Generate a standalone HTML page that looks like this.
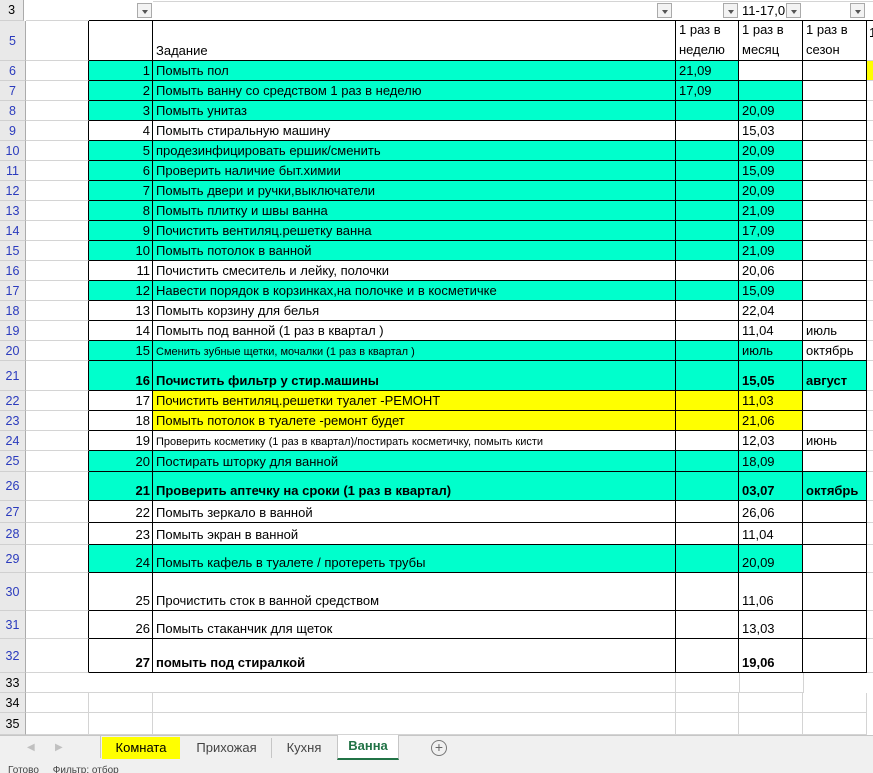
<!DOCTYPE html>
<html><head><meta charset="utf-8"><style>
*{margin:0;padding:0;box-sizing:border-box}
body{width:873px;height:773px;overflow:hidden;background:#fff;font-family:"Liberation Sans",sans-serif;font-size:13px;color:#000;position:relative}
.r{position:absolute;left:0;width:873px;display:flex}
.c{height:100%;display:flex;align-items:flex-end;padding:0 2px 2px 3px;white-space:nowrap;overflow:hidden;border-right:1px solid #000;border-bottom:1px solid #000}
.h{width:26px;background:#e9e9e9;border-right:1px solid #ababab;border-bottom:1px solid #d0d0d0;color:#2b3bbd;justify-content:center;align-items:center;padding:0;font-size:12.5px}
.a{width:63px;border-bottom:1px solid #d4d4d4}
.b{width:64px;justify-content:flex-end}
.cc{width:523px}
.d{width:63px}.e{width:64px}.f{width:64px}
.g{width:6px;border-right:none;border-bottom:1px solid #d4d4d4}
.t{background:#00ffcc}.y{background:#ffff00}
.bo{font-weight:bold}
.s{font-size:11px}
.flt{position:absolute;top:3px;width:15px;height:15px;border:1px solid #aaa;background:#f3f3f3}
.flt:after{content:"";position:absolute;left:4px;top:6px;border-left:3px solid transparent;border-right:3px solid transparent;border-top:4px solid #555}
</style></head><body>
<!-- row 3 -->
<div style="position:absolute;left:153px;top:1px;width:720px;height:1px;background:#d4d4d4"></div>
<div class="r" style="top:0;height:21px">
<div class="c h" style="color:#000">3</div>
<div style="width:847px;border-bottom:1px solid #000;margin-left:63px;height:21px"></div>
</div>
<div style="position:absolute;left:26px;top:20px;width:63px;height:1px;background:#d4d4d4"></div>
<div class="flt" style="left:137px"></div>
<div class="flt" style="left:657px"></div>
<div class="flt" style="left:723px"></div>
<div style="position:absolute;left:742px;top:3px;font-size:13px">11-17,0</div>
<div class="flt" style="left:786px"></div>
<div class="flt" style="left:850px"></div>
<!-- row 5 -->
<div class="r" style="top:21px;height:40px">
<div class="c h">5</div><div class="c a"></div><div class="c b"></div><div class="c cc">Задание</div>
<div class="c d" style="white-space:normal;line-height:20px;padding-bottom:0">1 раз в неделю</div>
<div class="c e" style="white-space:normal;line-height:20px;padding-bottom:0">1 раз в месяц</div>
<div class="c f" style="white-space:normal;line-height:20px;padding-bottom:0">1 раз в сезон</div>
<div class="c g" style="align-items:flex-start;padding:4px 0 0 2px">1</div></div>

<div class="r" style="top:61px;height:20px"><div class="c h">6</div><div class="c a"></div><div class="c b t">1</div><div class="c cc t">Помыть пол</div><div class="c d t">21,09</div><div class="c e"></div><div class="c f"></div><div class="c g y"></div></div>
<div class="r" style="top:81px;height:20px"><div class="c h">7</div><div class="c a"></div><div class="c b t">2</div><div class="c cc t">Помыть ванну со средством 1 раз в неделю</div><div class="c d t">17,09</div><div class="c e t"></div><div class="c f"></div><div class="c g"></div></div>
<div class="r" style="top:101px;height:20px"><div class="c h">8</div><div class="c a"></div><div class="c b t">3</div><div class="c cc t">Помыть унитаз</div><div class="c d t"></div><div class="c e t">20,09</div><div class="c f"></div><div class="c g"></div></div>
<div class="r" style="top:121px;height:20px"><div class="c h">9</div><div class="c a"></div><div class="c b">4</div><div class="c cc">Помыть стиральную машину</div><div class="c d"></div><div class="c e">15,03</div><div class="c f"></div><div class="c g"></div></div>
<div class="r" style="top:141px;height:20px"><div class="c h">10</div><div class="c a"></div><div class="c b t">5</div><div class="c cc t">продезинфицировать ершик/сменить</div><div class="c d t"></div><div class="c e t">20,09</div><div class="c f"></div><div class="c g"></div></div>
<div class="r" style="top:161px;height:20px"><div class="c h">11</div><div class="c a"></div><div class="c b t">6</div><div class="c cc t">Проверить наличие быт.химии</div><div class="c d t"></div><div class="c e t">15,09</div><div class="c f"></div><div class="c g"></div></div>
<div class="r" style="top:181px;height:20px"><div class="c h">12</div><div class="c a"></div><div class="c b t">7</div><div class="c cc t">Помыть двери и ручки,выключатели</div><div class="c d t"></div><div class="c e t">20,09</div><div class="c f"></div><div class="c g"></div></div>
<div class="r" style="top:201px;height:20px"><div class="c h">13</div><div class="c a"></div><div class="c b t">8</div><div class="c cc t">Помыть плитку и швы ванна</div><div class="c d t"></div><div class="c e t">21,09</div><div class="c f"></div><div class="c g"></div></div>
<div class="r" style="top:221px;height:20px"><div class="c h">14</div><div class="c a"></div><div class="c b t">9</div><div class="c cc t">Почистить вентиляц.решетку ванна</div><div class="c d t"></div><div class="c e t">17,09</div><div class="c f"></div><div class="c g"></div></div>
<div class="r" style="top:241px;height:20px"><div class="c h">15</div><div class="c a"></div><div class="c b t">10</div><div class="c cc t">Помыть потолок в ванной</div><div class="c d t"></div><div class="c e t">21,09</div><div class="c f"></div><div class="c g"></div></div>
<div class="r" style="top:261px;height:20px"><div class="c h">16</div><div class="c a"></div><div class="c b">11</div><div class="c cc">Почистить смеситель и лейку, полочки</div><div class="c d"></div><div class="c e">20,06</div><div class="c f"></div><div class="c g"></div></div>
<div class="r" style="top:281px;height:20px"><div class="c h">17</div><div class="c a"></div><div class="c b t">12</div><div class="c cc t">Навести порядок в корзинках,на полочке и в косметичке</div><div class="c d t"></div><div class="c e t">15,09</div><div class="c f"></div><div class="c g"></div></div>
<div class="r" style="top:301px;height:20px"><div class="c h">18</div><div class="c a"></div><div class="c b">13</div><div class="c cc">Помыть корзину для белья</div><div class="c d"></div><div class="c e">22,04</div><div class="c f"></div><div class="c g"></div></div>
<div class="r" style="top:321px;height:20px"><div class="c h">19</div><div class="c a"></div><div class="c b">14</div><div class="c cc">Помыть под ванной (1 раз в квартал )</div><div class="c d"></div><div class="c e">11,04</div><div class="c f">июль</div><div class="c g"></div></div>
<div class="r" style="top:341px;height:20px"><div class="c h">20</div><div class="c a"></div><div class="c b t">15</div><div class="c cc t s">Сменить зубные щетки, мочалки (1 раз в квартал )</div><div class="c d t"></div><div class="c e t">июль</div><div class="c f">октябрь</div><div class="c g"></div></div>
<div class="r" style="top:361px;height:30px"><div class="c h">21</div><div class="c a"></div><div class="c b t bo">16</div><div class="c cc t bo">Почистить фильтр у стир.машины</div><div class="c d t"></div><div class="c e t bo">15,05</div><div class="c f t bo">август</div><div class="c g"></div></div>
<div class="r" style="top:391px;height:20px"><div class="c h">22</div><div class="c a"></div><div class="c b">17</div><div class="c cc y">Почистить вентиляц.решетки туалет -РЕМОНТ</div><div class="c d y"></div><div class="c e y">11,03</div><div class="c f"></div><div class="c g"></div></div>
<div class="r" style="top:411px;height:20px"><div class="c h">23</div><div class="c a"></div><div class="c b">18</div><div class="c cc y">Помыть потолок в туалете -ремонт будет</div><div class="c d y"></div><div class="c e y">21,06</div><div class="c f"></div><div class="c g"></div></div>
<div class="r" style="top:431px;height:20px"><div class="c h">24</div><div class="c a"></div><div class="c b">19</div><div class="c cc s">Проверить косметику (1 раз в квартал)/постирать косметичку, помыть кисти</div><div class="c d"></div><div class="c e">12,03</div><div class="c f">июнь</div><div class="c g"></div></div>
<div class="r" style="top:451px;height:21px"><div class="c h">25</div><div class="c a"></div><div class="c b t">20</div><div class="c cc t">Постирать шторку для ванной</div><div class="c d t"></div><div class="c e t">18,09</div><div class="c f"></div><div class="c g"></div></div>
<div class="r" style="top:472px;height:29px"><div class="c h">26</div><div class="c a"></div><div class="c b t bo">21</div><div class="c cc t bo">Проверить аптечку на сроки (1 раз в квартал)</div><div class="c d t"></div><div class="c e t bo">03,07</div><div class="c f t bo">октябрь</div><div class="c g"></div></div>
<div class="r" style="top:501px;height:22px"><div class="c h">27</div><div class="c a"></div><div class="c b">22</div><div class="c cc">Помыть зеркало в ванной</div><div class="c d"></div><div class="c e">26,06</div><div class="c f"></div><div class="c g"></div></div>
<div class="r" style="top:523px;height:22px"><div class="c h">28</div><div class="c a"></div><div class="c b">23</div><div class="c cc">Помыть экран в ванной</div><div class="c d"></div><div class="c e">11,04</div><div class="c f"></div><div class="c g"></div></div>
<div class="r" style="top:545px;height:28px"><div class="c h">29</div><div class="c a"></div><div class="c b t">24</div><div class="c cc t">Помыть кафель в туалете / протереть трубы</div><div class="c d t"></div><div class="c e t">20,09</div><div class="c f"></div><div class="c g"></div></div>
<div class="r" style="top:573px;height:38px"><div class="c h">30</div><div class="c a"></div><div class="c b">25</div><div class="c cc">Прочистить сток в ванной средством</div><div class="c d"></div><div class="c e">11,06</div><div class="c f"></div><div class="c g"></div></div>
<div class="r" style="top:611px;height:28px"><div class="c h">31</div><div class="c a"></div><div class="c b">26</div><div class="c cc">Помыть стаканчик для щеток</div><div class="c d"></div><div class="c e">13,03</div><div class="c f"></div><div class="c g"></div></div>
<div class="r" style="top:639px;height:34px"><div class="c h">32</div><div class="c a"></div><div class="c b bo">27</div><div class="c cc bo">помыть под стиралкой</div><div class="c d"></div><div class="c e bo">19,06</div><div class="c f"></div><div class="c g"></div></div>
<!-- empty rows -->
<div class="r" style="top:673px;height:20px"><div class="c h" style="color:#000">33</div><div style="width:587px;border-bottom:1px solid #d4d4d4"></div><div class="c d" style="border-color:#d4d4d4"></div><div class="c e" style="border-color:#d4d4d4"></div><div class="c f" style="border-color:#d4d4d4"></div></div>
<div class="r" style="top:693px;height:20px"><div class="c h" style="color:#000">34</div><div class="c a" style="border-right:1px solid #d4d4d4"></div><div class="c b" style="border-color:#d4d4d4"></div><div class="c cc" style="border-color:#d4d4d4"></div><div class="c d" style="border-color:#d4d4d4"></div><div class="c e" style="border-color:#d4d4d4"></div><div class="c f" style="border-color:#d4d4d4"></div></div>
<div class="r" style="top:713px;height:22px"><div class="c h" style="color:#000">35</div><div class="c a" style="border-right:1px solid #d4d4d4"></div><div class="c b" style="border-color:#d4d4d4"></div><div class="c cc" style="border-color:#d4d4d4"></div><div class="c d" style="border-color:#d4d4d4"></div><div class="c e" style="border-color:#d4d4d4"></div><div class="c f" style="border-color:#d4d4d4"></div></div>
<!-- tab bar -->
<div style="position:absolute;left:0;top:735px;width:873px;height:28px;background:#f0f0f0;border-top:1px solid #c6c6c6;font-size:13px">
<span style="position:absolute;left:27px;top:6px;color:#c0c0c0;font-size:10px">◀</span>
<span style="position:absolute;left:55px;top:6px;color:#c0c0c0;font-size:10px">▶</span>
<div style="position:absolute;left:100px;top:0;width:1px;height:22px;background:#c6c6c6"></div>
<div style="position:absolute;left:102px;top:1px;width:78px;height:22px;background:#ffff00;text-align:center;line-height:22px">Комната</div>
<div style="position:absolute;left:183px;top:1px;width:87px;height:22px;text-align:center;line-height:22px;color:#444">Прихожая</div>
<div style="position:absolute;left:271px;top:2px;width:1px;height:20px;background:#c6c6c6"></div>
<div style="position:absolute;left:272px;top:1px;width:64px;height:22px;text-align:center;line-height:22px;color:#444">Кухня</div>
<div style="position:absolute;left:337px;top:-1px;width:62px;height:25px;background:#fff;border:1px solid #c6c6c6;border-top:none;border-bottom:2px solid #217346;text-align:center;line-height:22px;color:#217346;font-weight:bold">Ванна</div>
<div style="position:absolute;left:431px;top:4px;width:16px;height:16px;border:1px solid #777;border-radius:50%;text-align:center;line-height:13px;color:#666;font-size:14px">+</div>
</div>
<div style="position:absolute;left:0;top:763px;width:873px;height:10px;background:#f0f0f0;font-size:10px;color:#444;overflow:hidden;line-height:16px;padding-left:8px">Готово&nbsp;&nbsp;&nbsp;&nbsp;&nbsp;Фильтр: отбор</div>
</body></html>
